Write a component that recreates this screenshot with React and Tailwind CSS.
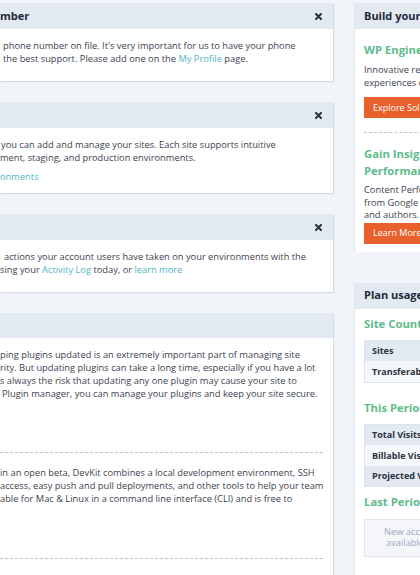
import React from 'react';

const CloseIcon = () => (
  <svg width="7" height="7" viewBox="0 0 7 7" className="shrink-0">
    <path d="M1 1 L6 6 M6 1 L1 6" stroke="#1f2b3a" strokeWidth="1.9" strokeLinecap="round" />
  </svg>
);

const Line = ({ pl = 0, children }) => (
  <div className="whitespace-nowrap leading-[13px]" style={{ paddingLeft: pl }}>
    {children}
  </div>
);

const Link = ({ children }) => <span className="text-[#4fb5c6]">{children}</span>;

const NoticeCard = ({ title, children }) => (
  <div className="bg-white shadow-[1px_1px_1px_rgba(20,40,70,0.12)]">
    <div className="h-[26px] bg-[#e3e9f0] flex items-center justify-between pr-[11px]">
      <span className="text-[11px] font-bold text-[#1e2a38] whitespace-nowrap">{title}</span>
      <CloseIcon />
    </div>
    {children}
  </div>
);

const SideHeading = ({ children }) => (
  <div className="text-[11.3px] font-bold text-[#5dbb8c] leading-[17px] whitespace-nowrap">{children}</div>
);

const OrangeButton = ({ children }) => (
  <div className="h-[21px] bg-[#e8612c] text-white text-[9px] flex items-center pl-[9px] whitespace-nowrap w-[120px]">
    {children}
  </div>
);

const StatTable = ({ rows }) => (
  <div className="border border-[#dde3ea] w-[140px]">
    {rows.map((row, i) => (
      <div
        key={row}
        className={`h-[20.5px] flex items-center pl-[7px] text-[9px] font-bold text-[#2a3340] whitespace-nowrap ${
          i % 2 === 0 ? 'bg-[#e3e9f0]' : 'bg-[#f5f7fa]'
        }`}
      >
        {row}
      </div>
    ))}
  </div>
);

export default function App() {
  return (
    <div className="w-[420px] h-[575px] overflow-hidden bg-[#f1f4f8] font-['Open_Sans',sans-serif] text-[#3b4350] text-[9.3px] flex items-start pt-[3px]">
      {/* main column */}
      <div className="w-[333px] shrink-0 flex flex-col gap-[21px]">
        <NoticeCard title="mber">
          <div className="pt-[10px] pb-[16px]">
            <Line pl={3}>phone number on file. It's very important for us to have your phone</Line>
            <Line pl={3}>the best support. Please add one on the <Link>My Profile</Link> page.</Line>
          </div>
        </NoticeCard>

        <NoticeCard title="">
          <div className="pt-[10px] pb-[10px]">
            <Line pl={1}>you can add and manage your sites. Each site supports intuitive</Line>
            <Line>ment, staging, and production environments.</Line>
            <div className="mt-[6px]">
              <Line><Link>onments</Link></Line>
            </div>
          </div>
        </NoticeCard>

        <NoticeCard title="">
          <div className="pt-[10px] pb-[16px]">
            <Line pl={4}>actions your account users have taken on your environments with the</Line>
            <Line>sing your <Link>Activity Log</Link> today, or <Link>learn more</Link></Line>
          </div>
        </NoticeCard>

        <div className="bg-white shadow-[1px_1px_1px_rgba(20,40,70,0.12)] h-[300px]">
          <div className="h-[25px] bg-[#e3e9f0]" />
          <div className="pr-[10px]">
            <div className="pt-[10px] h-[115px] border-b border-dashed border-[#b9c4d1]">
              <Line>ping plugins updated is an extremely important part of managing site</Line>
              <Line>rity. But updating plugins can take a long time, especially if you have a lot</Line>
              <Line>s always the risk that updating any one plugin may cause your site to</Line>
              <Line pl={2}>Plugin manager, you can manage your plugins and keep your site secure.</Line>
            </div>
            <div className="pt-[13px] h-[106px] border-b border-dashed border-[#b9c4d1]">
              <Line>in an open beta, DevKit combines a local development environment, SSH</Line>
              <Line>access, easy push and pull deployments, and other tools to help your team</Line>
              <Line>able for Mac &amp; Linux in a command line interface (CLI) and is free to</Line>
            </div>
          </div>
        </div>
      </div>

      {/* side column */}
      <div className="ml-[21px] w-[200px] shrink-0 flex flex-col gap-[31px]">
        <div className="bg-white border-l border-[#e1e6ec]">
          <div className="h-[26px] bg-[#e3e9f0] flex items-center pl-[9px]">
            <span className="text-[11px] font-bold text-[#1e2a38] whitespace-nowrap">Build your business</span>
          </div>
          <div className="pl-[9px] pt-[12px] pb-[8px]">
            <SideHeading>WP Engine Solution Center</SideHeading>
            <div className="mt-[6px] leading-[12.5px]">
              <div className="whitespace-nowrap">Innovative resources to help you build</div>
              <div className="whitespace-nowrap">experiences on WordPress.</div>
            </div>
            <div className="mt-[8px]">
              <OrangeButton>Explore Solutions</OrangeButton>
            </div>
            <div className="mt-[14px] border-t border-dashed border-[#b9c4d1]" />
            <div className="mt-[12px]">
              <SideHeading>Gain Insights into Content</SideHeading>
              <SideHeading>Performance</SideHeading>
            </div>
            <div className="mt-[5px] leading-[12.5px]">
              <div className="whitespace-nowrap">Content Performance reports</div>
              <div className="whitespace-nowrap">from Google Analytics on pages</div>
              <div className="whitespace-nowrap">and authors.</div>
            </div>
            <div className="mt-[1px]">
              <OrangeButton>Learn More</OrangeButton>
            </div>
          </div>
        </div>

        <div className="bg-white border-l border-[#e1e6ec] h-[300px]">
          <div className="h-[26px] bg-[#e3e9f0] flex items-center pl-[9px]">
            <span className="text-[11px] font-bold text-[#1e2a38] whitespace-nowrap">Plan usage</span>
          </div>
          <div className="pl-[9px] pt-[6px]">
            <SideHeading>Site Counts</SideHeading>
            <div className="mt-[8px]">
              <StatTable rows={['Sites', 'Transferable Sites']} />
            </div>
            <div className="mt-[16px]">
              <SideHeading>This Period</SideHeading>
            </div>
            <div className="mt-[8px]">
              <StatTable rows={['Total Visits', 'Billable Visits', 'Projected Visits']} />
            </div>
            <div className="mt-[6px]">
              <SideHeading>Last Period</SideHeading>
            </div>
            <div className="mt-[9px] h-[38px] w-[140px] border border-[#dfe5ec] bg-[#f4f6f9] text-[#9aa9c4] leading-[11px] pt-[6px]">
              <div className="pl-[19px] whitespace-nowrap">New accounts will not have</div>
              <div className="pl-[21px] whitespace-nowrap">available data yet</div>
            </div>
          </div>
        </div>
      </div>
    </div>
  );
}
